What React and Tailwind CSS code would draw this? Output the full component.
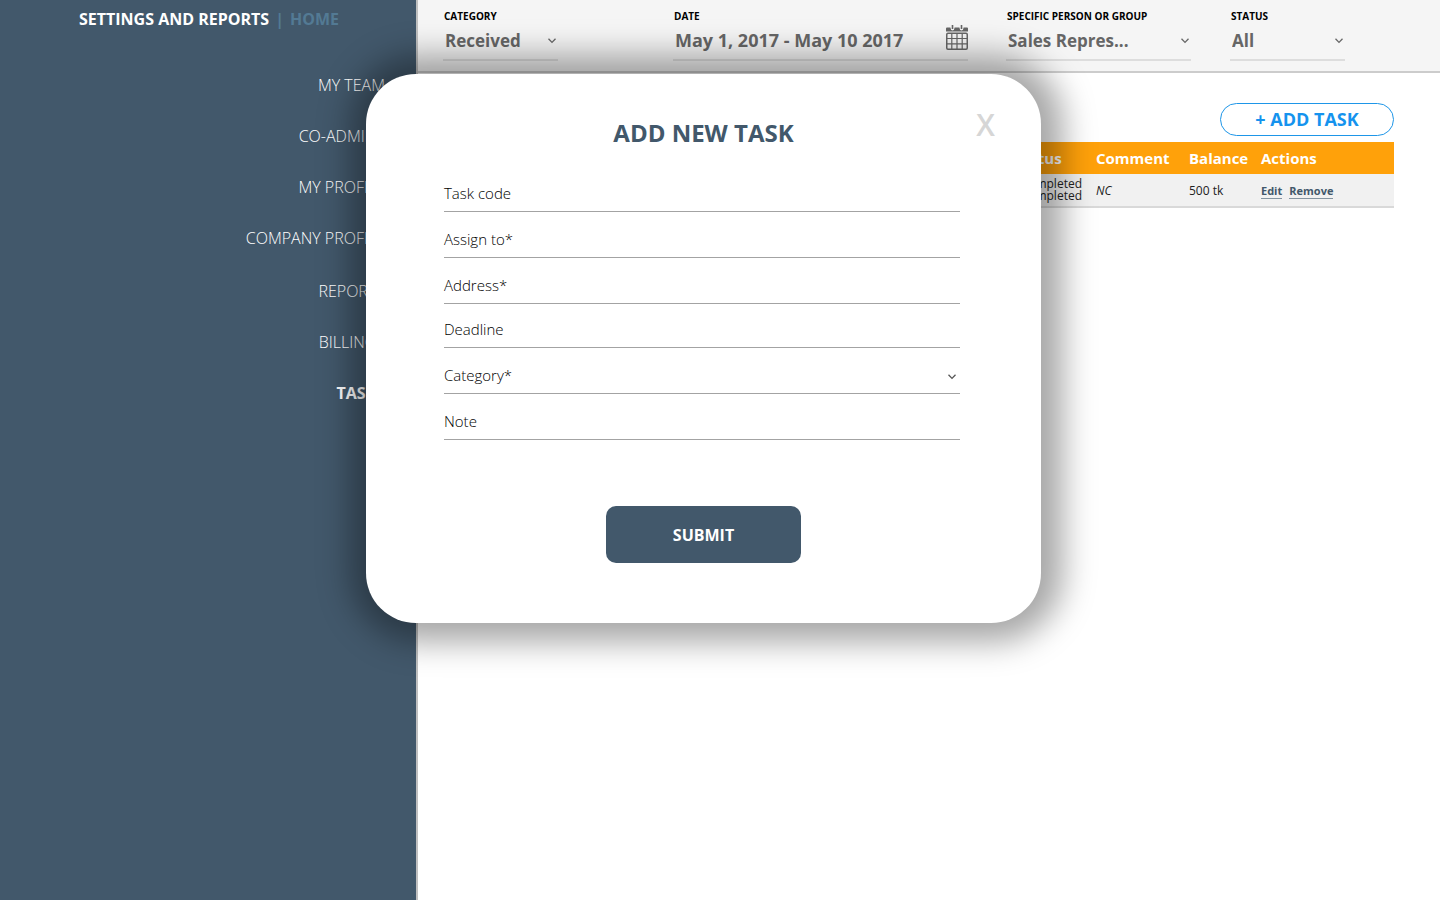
import React from "react";

const menuTop = ["MY TEAM", "CO-ADMINS", "MY PROFILE", "COMPANY PROFILE"];
const menuBottom = ["REPORTS", "BILLINGS", "TASKS"];

function Chevron({ className }) {
  return (
    <svg className={className} width="8" height="6" viewBox="0 0 8 6" fill="none" stroke="currentColor" strokeWidth="1.3" aria-hidden="true">
      <path d="M0.5 0.8 L4 4.4 L7.5 0.8" />
    </svg>
  );
}

function CalendarIcon() {
  return (
    <svg width="22" height="25" viewBox="0 0 22 25" fill="none" aria-hidden="true">
      <path d="M0 3.5 Q0 2.5 1 2.5 H4.4 Q4.6 5.4 6.5 5.4 Q8.4 5.4 8.6 2.5 H13.4 Q13.6 5.4 15.5 5.4 Q17.4 5.4 17.6 2.5 H21 Q22 2.5 22 3.5 V6.5 H0 Z" fill="#666" />
      <path d="M6.5 0 V4 M15.5 0 V4" stroke="#666" strokeWidth="1.6" />
      <rect x="0.75" y="8.25" width="20.5" height="16" rx="1.2" stroke="#666" strokeWidth="1.5" />
      <path d="M5.8 8.5 V24 M11 8.5 V24 M16.2 8.5 V24 M1 13.5 H21 M1 18.8 H21" stroke="#666" strokeWidth="1.2" />
    </svg>
  );
}

function MenuItem({ name }) {
  return (
    <li>
      <a href="#" className={"flex h-[51px] items-center justify-end text-base text-white " + (name === "TASKS" ? "font-bold" : "font-light")}>
        {name}
      </a>
    </li>
  );
}

function FilterSelect({ id, label, value, className }) {
  return (
    <div className={"flex flex-col " + className}>
      <label htmlFor={id} className="h-4 pl-px text-[10px] leading-4 font-bold text-black">{label}</label>
      <div className="relative border-b-2 border-[#dddddd]">
        <select id={id} className="block h-[35px] w-full appearance-none bg-transparent pb-0.5 pl-0.5 text-[17px] font-bold text-[#666]">
          <option>{value}</option>
        </select>
        <Chevron className="pointer-events-none absolute top-3.5 right-0.5 text-[#666]" />
      </div>
    </div>
  );
}

function Field({ id, label, short, select }) {
  return (
    <div className={"relative flex items-end border-b border-[#a3a3a3] pb-1.5 " + (short ? "h-[44px]" : "h-[46px]")}>
      <label htmlFor={id} className="text-[15px] leading-6 font-light text-black">{label}</label>
      {select ? (
        <>
          <select id={id} className="h-6 flex-1 appearance-none bg-transparent pl-2 text-[15px] outline-none">
            <option value=""></option>
          </select>
          <Chevron className="pointer-events-none absolute right-1 bottom-[13px] text-[#555]" />
        </>
      ) : (
        <input id={id} type="text" className="h-6 min-w-0 flex-1 bg-transparent pl-2 text-[15px] outline-none" />
      )}
    </div>
  );
}

export default function App() {
  return (
    <div className="relative flex min-h-screen bg-white font-['Open_Sans','Noto_Sans',sans-serif]">
      <aside className="w-[416px] shrink-0 bg-[#42586b] pr-[31px]">
        <nav className="flex gap-1.5 pt-[7px] pl-[79px] text-base leading-6 font-bold whitespace-nowrap">
          <a href="#" className="text-white">SETTINGS AND REPORTS</a>
          <span className="text-[#537a94]">|</span>
          <a href="#" className="text-[#537a94]">HOME</a>
        </nav>
        <ul className="mt-7">
          {menuTop.map((name) => <MenuItem key={name} name={name} />)}
        </ul>
        <ul className="mt-0.5">
          {menuBottom.map((name) => <MenuItem key={name} name={name} />)}
        </ul>
      </aside>

      <main className="min-w-0 flex-1 border-l-2 border-[#c0c0c0]">
        <header className="flex border-b-2 border-[#cccccc] bg-[#f5f5f5] pt-2 pb-[10px] pl-[25px]">
          <FilterSelect id="category" label="CATEGORY" value="Received" className="mr-[115px] w-[115px]" />
          <div className="mr-[38px] flex w-[295px] flex-col">
            <label htmlFor="date" className="h-4 pl-px text-[10px] leading-4 font-bold text-black">DATE</label>
            <div className="flex h-[37px] border-b-2 border-[#dddddd]">
              <input id="date" type="text" defaultValue="May 1, 2017 - May 10 2017" className="min-w-0 flex-1 bg-transparent pb-0.5 pl-0.5 text-[18px] font-bold text-[#666] outline-none" />
              <button type="button" aria-label="Open calendar" className="flex items-start pt-px">
                <CalendarIcon />
              </button>
            </div>
          </div>
          <FilterSelect id="person" label="SPECIFIC PERSON OR GROUP" value="Sales Repres..." className="mr-[39px] w-[185px]" />
          <FilterSelect id="status" label="STATUS" value="All" className="w-[115px]" />
        </header>

        <section className="pt-[30px] pr-[46px] pl-[26px]">
          <div className="flex justify-end">
            <button type="button" className="h-[33px] w-[174px] rounded-full border border-[#1e96e8] text-[18px] font-bold text-[#1593ee]">
              + ADD TASK
            </button>
          </div>
          <table className="mt-1.5 w-full table-fixed border-collapse text-left">
            <colgroup>
              <col />
              <col className="w-[82px]" />
              <col className="w-[93px]" />
              <col className="w-[72px]" />
              <col className="w-[133px]" />
            </colgroup>
            <thead>
              <tr className="h-8 bg-[#ffa10a] text-[15px] text-white">
                <td></td>
                <th className="font-bold">Status</th>
                <th className="font-bold">Comment</th>
                <th className="font-bold">Balance</th>
                <th className="font-bold">Actions</th>
              </tr>
            </thead>
            <tbody>
              <tr className="h-[33px] border-b-2 border-[#d9d9d9] bg-[#f1f1f1] text-xs leading-3 text-[#222]">
                <td></td>
                <td className="pr-3.5 text-right">Completed<br />Completed</td>
                <td className="pt-0.5 italic">NC</td>
                <td className="pt-0.5">500 tk</td>
                <td className="pt-0.5 text-[11px] font-bold text-[#42586b]">
                  <a href="#" className="mr-[7px] border-b border-[#8494a0]">Edit</a>
                  <a href="#" className="border-b border-[#8494a0]">Remove</a>
                </td>
              </tr>
            </tbody>
          </table>
        </section>
      </main>

      <div className="absolute inset-0 flex items-start justify-center pt-[74px] pr-[33px]">
        <form role="dialog" aria-labelledby="dialog-title" className="relative w-[675px] rounded-[50px] bg-white px-[78px] pt-[43px] pb-[60px] shadow-[3px_0_32px_19px_rgba(0,0,0,0.35)]">
          <button type="button" aria-label="Close" className="absolute top-[31px] right-[46px] text-[30px] leading-10 font-semibold text-[#d6d6d6]">X</button>
          <h1 id="dialog-title" className="text-center text-[24px] leading-8 font-bold text-[#42586b]">ADD NEW TASK</h1>
          <div className="mt-[17px] mr-[3px]">
            <Field id="task-code" label="Task code" />
            <Field id="assign" label="Assign to*" />
            <Field id="address" label="Address*" />
            <Field id="deadline" label="Deadline" short />
            <Field id="task-category" label="Category*" select />
            <Field id="note" label="Note" />
          </div>
          <button type="submit" className="mx-auto mt-[66px] block h-[57px] w-[195px] rounded-[10px] bg-[#42586b] text-base font-bold text-white">
            SUBMIT
          </button>
        </form>
      </div>
    </div>
  );
}
